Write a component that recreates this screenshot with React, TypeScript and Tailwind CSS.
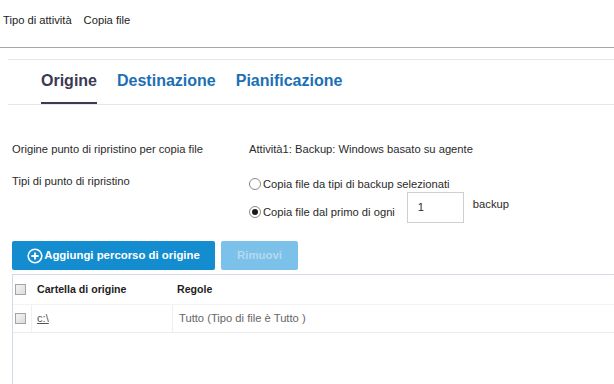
import React from 'react';

const sans = { fontFamily: '"Liberation Sans", Arial, sans-serif' };

const Radio = ({ checked }: { checked?: boolean }) => (
  <span className="w-[12px] h-[12px] rounded-full border border-[#8a8a8a] bg-white flex items-center justify-center shrink-0">
    {checked && <span className="w-[6px] h-[6px] rounded-full bg-[#1a1a1a]" />}
  </span>
);

const Check = () => (
  <span className="w-[11px] h-[11px] border border-[#a4a4a4] bg-gradient-to-br from-[#f4f4f4] to-[#dcdcdc] shrink-0" />
);

export default function App() {
  return (
    <div className="w-[614px] h-[384px] bg-white overflow-hidden text-[11.2px] text-[#222]" style={sans}>
      {/* Task type header */}
      <div className="h-[47px] pl-[3px] pt-[14px] flex gap-[12px] leading-[13px]">
        <span>Tipo di attività</span>
        <span>Copia file</span>
      </div>
      <div className="h-px bg-[#a6a6a6]" />

      <div className="pl-[8px] pt-[11px]">
        <div className="h-px bg-[#e1e7ee]" />
        {/* Tabs */}
        <div className="h-[44px] flex items-end gap-[20px] pl-[33px] text-[16px] font-bold">
          <div className="h-full flex flex-col justify-end">
            <span className="text-[#3b3a52] leading-[18px] mb-[12px]">Origine</span>
            <div className="h-[2px] bg-[#3b3a52]" />
          </div>
          <span className="text-[#1c6fb5] leading-[18px] mb-[14px]">Destinazione</span>
          <span className="text-[#1c6fb5] leading-[18px] mb-[14px]">Pianificazione</span>
        </div>
        <div className="h-px bg-[#e1e7ee]" />
      </div>

      <div className="pl-[12px] pt-[37px] text-[#2a2a2a]">
        {/* Source row */}
        <div className="flex leading-[14px]">
          <span className="w-[237px]">Origine punto di ripristino per copia file</span>
          <span>Attività1: Backup: Windows basato su agente</span>
        </div>
        {/* Recovery point types */}
        <div className="flex mt-[17px]">
          <span className="w-[237px] leading-[14px] pt-[1px]">Tipi di punto di ripristino</span>
          <div className="flex flex-col">
            <div className="flex items-center gap-[2px] h-[16px] mt-[3px]">
              <Radio />
              <span className="leading-[14px]">Copia file da tipi di backup selezionati</span>
            </div>
            <div className="flex items-start">
              <div className="flex items-center gap-[2px] h-[16px] mt-[12px]">
                <Radio checked />
                <span className="leading-[14px]">Copia file dal primo di ogni</span>
              </div>
              <div className="ml-[12px] w-[57px] h-[31px] border border-[#cfcfcf] flex items-center pl-[10px]">1</div>
              <span className="ml-[9px] leading-[14px] mt-[5px]">backup</span>
            </div>
          </div>
        </div>

        {/* Buttons */}
        <div className="flex gap-[6px] mt-[18px] h-[29px]">
          <button className="w-[203px] rounded-[2px] bg-[#138cd0] text-white font-bold text-[11.4px] flex items-center justify-center gap-[1px]">
            <svg width="16" height="16" viewBox="0 0 16 16" fill="none">
              <circle cx="8" cy="8" r="6.8" stroke="white" strokeWidth="1.6" />
              <path d="M8 4.4v7.2M4.4 8h7.2" stroke="white" strokeWidth="1.8" />
            </svg>
            Aggiungi percorso di origine
          </button>
          <button className="w-[77px] rounded-[2px] bg-[#7cc1ea] text-[#b6d9ee] font-bold text-[11.4px]">Rimuovi</button>
        </div>

        {/* Table */}
        <div className="mt-[4px] border-t border-l border-[#d3dce6] h-[120px]">
          <div className="flex items-center h-[30px] border-b border-[#f3f3f3]">
            <div className="w-[19px] flex justify-start pl-[2px]"><Check /></div>
            <span className="w-[141px] pl-[5px] font-bold text-[10.6px] text-[#1e1e1e]">Cartella di origine</span>
            <span className="pl-[4px] font-bold text-[10.6px] text-[#1e1e1e]">Regole</span>
          </div>
          <div className="flex items-center h-[28px] border-b border-[#ececec]">
            <div className="w-[19px] h-full flex items-center justify-start pl-[2px] border-r border-[#f0f0f0]"><Check /></div>
            <span className="w-[141px] h-full flex items-center pl-[5px] underline text-[#555] border-r border-[#eeeeee]">c:\</span>
            <span className="pl-[6px] text-[#666]">Tutto (Tipo di file è Tutto )</span>
          </div>
        </div>
      </div>
    </div>
  );
}
